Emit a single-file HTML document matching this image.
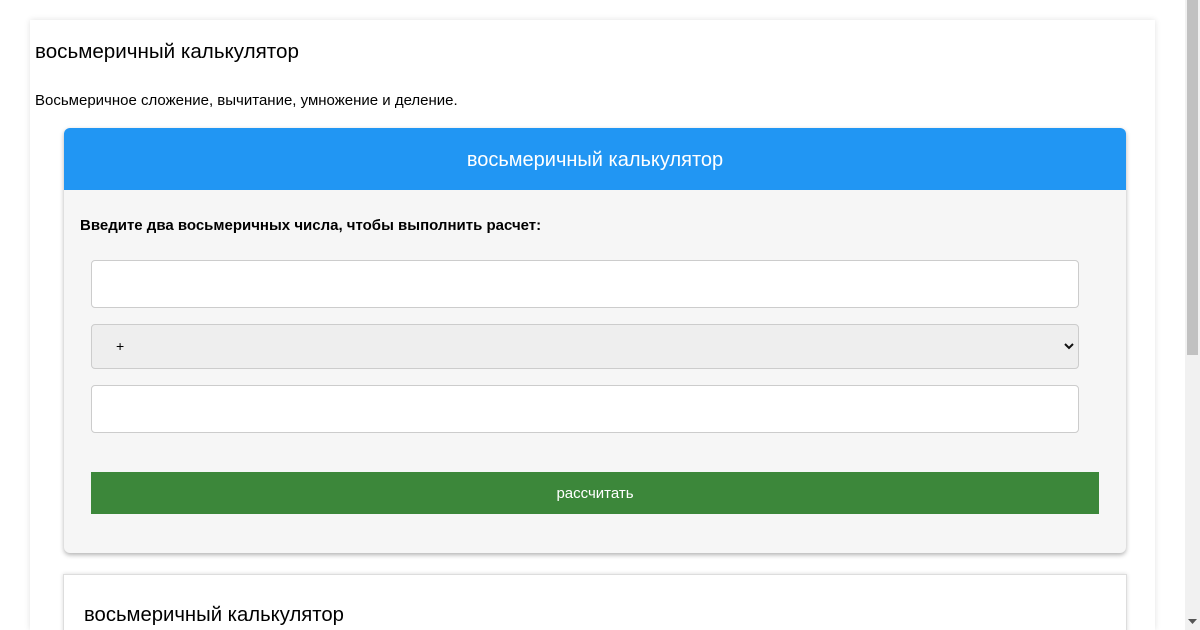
<!DOCTYPE html>
<html><head><meta charset="utf-8"><style>
*{box-sizing:border-box;margin:0;padding:0}
html,body{width:1200px;height:630px;overflow:hidden}
body{background:#fff;font-family:"Liberation Sans",sans-serif;position:relative;color:#000}
.main{position:absolute;left:30px;top:20px;width:1125px;height:610px;background:#fff;box-shadow:0 0 6px rgba(0,0,0,.12)}
.abs{position:absolute;white-space:nowrap}
.card{position:absolute;left:64px;top:128px;width:1062px;height:425px;background:#f6f6f6;border-radius:6px;box-shadow:0 2px 5px rgba(0,0,0,.3);overflow:hidden}
.hdr{height:62px;background:#2196f3;color:#fff;font-size:20px;text-align:center;line-height:64px}
.inp{position:absolute;left:91px;width:988px;height:48px;background:#fff;border:1px solid #ccc;border-radius:4px}
.sel{position:absolute;left:91px;top:324px;width:988px;height:45px;background:#eee;border:1px solid #ccc;border-radius:4px;font-size:14px;line-height:43px;padding-left:24px}
.btn{position:absolute;left:91px;top:472px;width:1008px;height:42px;background:#3c873a;color:#fff;font-size:15px;text-align:center;line-height:44px}
.card2{position:absolute;left:63px;top:574px;width:1064px;height:80px;background:#fff;border:1px solid #ddd;box-shadow:0 0 4px rgba(0,0,0,.15)}
.sb{position:absolute;left:1185px;top:0;width:15px;height:630px;background:#f1f1f1}
.th{position:absolute;left:1187px;top:0;width:11px;height:355px;background:#c1c1c1}
</style></head><body>
<div class="main"></div>
<div class="abs" style="left:35px;top:40px;font-size:20.6px">восьмеричный калькулятор</div>
<div class="abs" style="left:35px;top:92px;font-size:15px">Восьмеричное сложение, вычитание, умножение и деление.</div>
<div class="card"><div class="hdr">восьмеричный калькулятор</div></div>
<div class="abs" style="left:80px;top:217px;font-size:15px;font-weight:bold">Введите два восьмеричных числа, чтобы выполнить расчет:</div>
<div class="inp" style="top:260px"></div>
<div class="sel">+
<svg style="position:absolute;right:4px;top:17px" width="10" height="8" viewBox="0 0 10 8"><path d="M1 2l4 4 4-4" stroke="#111" stroke-width="2" fill="none"/></svg></div>
<div class="inp" style="top:385px"></div>
<div class="btn">рассчитать</div>
<div class="card2"></div>
<div class="abs" style="left:84px;top:604px;font-size:20.3px">восьмеричный калькулятор</div>
<div class="sb"></div><div class="th"></div>
<svg style="position:absolute;left:1188px;top:619px" width="9" height="5"><path d="M0 0h9L4.5 5z" fill="#555"/></svg>
</body></html>
